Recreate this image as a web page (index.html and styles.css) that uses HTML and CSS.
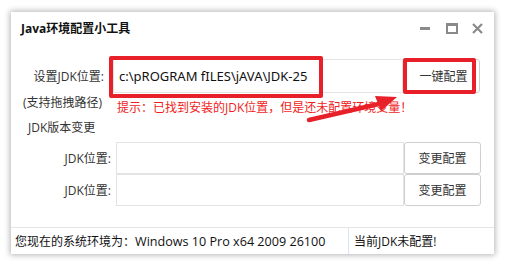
FILE: index.html
```html
<!DOCTYPE html>
<html lang="zh-CN">
<head>
<meta charset="utf-8">
<title>Java环境配置小工具</title>
<link rel="stylesheet" href="styles.css">
</head>
<body>
<div class="window">
  <div class="titlebar">
    <div class="title">Java环境配置小工具</div>
    <div class="controls">
      <span class="ctl ctl-min"></span>
      <span class="ctl ctl-max"></span>
      <svg class="ctl-close" width="11" height="11" viewBox="0 0 11 11"><path d="M1 1 L10 10 M10 1 L1 10" stroke="#8a8a8a" stroke-width="2.2"/></svg>
    </div>
  </div>
  <div class="content">
    <div class="row row-main">
      <div class="label label-main">设置JDK位置:</div>
      <div class="input input-main">c:\pROGRAM fILES\jAVA\JDK-25</div>
      <div class="btn btn-main">一键配置</div>
    </div>
    <div class="row row-hint">
      <div class="side-note">(支持拖拽路径)</div>
      <div class="hint">提示：已找到安装的JDK位置，但是还未配置环境变量！</div>
    </div>
    <div class="section">JDK版本变更</div>
    <div class="row row-jdk">
      <div class="label label-jdk">JDK位置:</div>
      <div class="input input-jdk"></div>
      <div class="btn btn-jdk">变更配置</div>
    </div>
    <div class="row row-jdk">
      <div class="label label-jdk">JDK位置:</div>
      <div class="input input-jdk"></div>
      <div class="btn btn-jdk">变更配置</div>
    </div>
  </div>
  <div class="statusbar">
    <div class="status-env">您现在的系统环境为：<span class="env-value">Windows 10 Pro x64 2009 26100</span></div>
    <div class="status-jdk">当前JDK未配置!</div>
  </div>
  <div class="mark mark-input"></div>
  <div class="mark mark-btn"></div>
  <svg class="arrow" width="100" height="30" viewBox="0 0 100 30">
    <path d="M4 25 L78 8" stroke="#e8202a" stroke-width="4.5" stroke-linecap="round"/>
    <path d="M70 1 L92 2 L76 16 Z" fill="#e8202a"/>
  </svg>
</div>
</body>
</html>
```
FILE: styles.css
```css
html, body {
  margin: 0;
  padding: 0;
  background: #ffffff;
}
body {
  width: 505px;
  height: 266px;
  overflow: hidden;
  font-family: "Open Sans", "Noto Sans CJK SC", sans-serif;
  font-size: 12px;
  color: #222;
}
.window {
  position: relative;
  margin: 12px 0 0 11px;
  width: 483px;
  height: 242px;
  background: #fff;
  box-shadow: 0 0 6px 1px rgba(0,0,0,0.3);
  display: flex;
  flex-direction: column;
}
.titlebar {
  height: 30px;
  display: flex;
  align-items: center;
  justify-content: space-between;
  padding: 0 11px 0 10px;
}
.title {
  font-weight: bold;
  font-size: 12px;
  color: #111;
  padding-top: 1px;
}
.controls {
  display: flex;
  align-items: center;
  gap: 14px;
  padding-top: 2px;
}
.ctl-min {
  width: 10px;
  height: 3px;
  background: #8a8a8a;
}
.ctl-max {
  width: 8px;
  height: 6px;
  border: 2px solid #8a8a8a;
  border-top-width: 3px;
  margin-left: 2px;
}
.ctl-close { display: block; }
.content {
  flex: 1;
  padding-top: 17px;
}
.row {
  display: flex;
  align-items: center;
}
.label {
  text-align: right;
  color: #333;
  flex: none;
}
.label-main {
  width: 93px;
  margin-right: 9px;
}
.input {
  border: 1px solid #e3e3e3;
  box-sizing: border-box;
  display: flex;
  align-items: center;
  color: #111;
  flex: none;
}
.input-main {
  width: 290px;
  height: 34px;
  padding-left: 5px;
  font-family: "Noto Sans", "Noto Sans CJK SC", sans-serif;
  font-size: 13px;
}
.btn {
  border: 1px solid #cfcfcf;
  border-radius: 3px;
  box-sizing: border-box;
  display: flex;
  align-items: center;
  justify-content: center;
  color: #333;
  background: #fff;
  flex: none;
}
.btn-main {
  width: 77px;
  height: 34px;
  padding-left: 4px;
}
.row-hint {
  align-items: flex-start;
  margin-top: 1px;
}
.side-note {
  width: 97px;
  margin-left: 12px;
  color: #333;
  line-height: 18px;
}
.hint {
  color: #f01c1c;
  margin-left: -3px;
  margin-top: 5px;
  line-height: 18px;
}
.section {
  margin: 2px 0 0 17px;
  color: #333;
  line-height: 18px;
}
.row-jdk { height: 32px; }
.section + .row-jdk { margin-top: 5px; }
.label-jdk {
  width: 100px;
  margin-right: 5px;
}
.input-jdk {
  width: 288px;
  height: 32px;
}
.btn-jdk {
  width: 77px;
  height: 32px;
}
.statusbar {
  height: 26px;
  border-top: 1px solid #e4e4e4;
  display: flex;
  align-items: center;
}
.status-env {
  width: 337px;
  padding-left: 4px;
  color: #111;
  box-sizing: border-box;
}
.env-value {
  font-size: 12.6px;
}
.status-jdk {
  height: 100%;
  border-left: 1px solid #dbe6f2;
  padding-left: 5px;
  display: flex;
  align-items: center;
  color: #111;
}
.mark {
  position: absolute;
  border: 4px solid #e8202a;
  border-radius: 2px;
  box-sizing: border-box;
}
.mark-input {
  left: 98px;
  top: 44px;
  width: 214px;
  height: 42px;
}
.mark-btn {
  left: 392px;
  top: 46px;
  width: 73px;
  height: 36px;
}
.arrow {
  position: absolute;
  left: 294px;
  top: 83px;
}
```
